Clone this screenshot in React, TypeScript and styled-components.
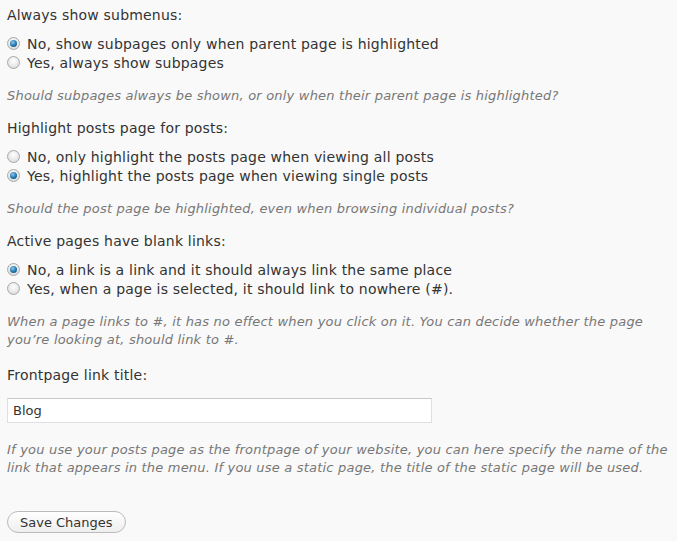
import React from "react";
import styled, { createGlobalStyle } from "styled-components";

const GlobalStyle = createGlobalStyle`
  html, body {
    margin: 0;
    padding: 0;
    background: #f9f9f9;
  }
  body {
    font-family: "DejaVu Sans", Verdana, sans-serif;
    font-size: 14px;
    letter-spacing: 0.2px;
    color: #333;
  }
`;

const Page = styled.form`
  display: flex;
  flex-direction: column;
  align-items: flex-start;
  padding: 6px 7px 8px;
  width: 677px;
  box-sizing: border-box;
`;

const Section = styled.div<{ $top?: number }>`
  display: flex;
  flex-direction: column;
  align-self: stretch;
  margin-top: ${({ $top }) => $top ?? 0}px;
  margin-bottom: 14px;
`;

const Label = styled.div`
  line-height: 18px;
  margin-bottom: 10px;
  color: #333;
`;

const RadioList = styled.div`
  display: flex;
  flex-direction: column;
`;

const Option = styled.label`
  display: flex;
  align-items: center;
  gap: 7px;
  height: 19px;
  color: #333;
`;

const Dot = styled.span<{ $on?: boolean }>`
  width: 13px;
  height: 13px;
  box-sizing: border-box;
  border-radius: 50%;
  border: 1px solid #a8a8a8;
  background: radial-gradient(circle at 50% 35%, #ffffff 0%, #e6e6e6 60%, #cfcfcf 100%);
  display: flex;
  align-items: center;
  justify-content: center;
  flex-shrink: 0;

  &::after {
    content: "";
    display: ${({ $on }) => ($on ? "block" : "none")};
    width: 7px;
    height: 7px;
    border-radius: 50%;
    background: radial-gradient(circle at 40% 35%, #8ccbf0 0%, #1f74ad 55%, #0b3f66 100%);
  }
`;

const Help = styled.p<{ $gap?: number }>`
  margin: ${({ $gap }) => $gap ?? 15}px 0 0;
  font-size: 13px;
  font-style: italic;
  color: #777;
  line-height: 18px;
`;

const TextInput = styled.input`
  display: block;
  width: 425px;
  height: 25px;
  box-sizing: border-box;
  margin: 4px 0 0;
  border: 1px solid #dfdfdf;
  border-top-color: #c8c8c8;
  background: #fff;
  font-family: "DejaVu Sans", Verdana, sans-serif;
  font-size: 13px;
  color: #333;
  padding: 0 5px;
  outline: none;
`;

const Actions = styled.div`
  margin-top: 20px;
`;

const Button = styled.button`
  font-family: "DejaVu Sans", Verdana, sans-serif;
  font-size: 13px;
  letter-spacing: 0;
  color: #333;
  height: 22px;
  padding: 0 12px;
  border: 1px solid #bbb;
  border-radius: 11px;
  background: linear-gradient(#ffffff, #eeeeee);
  cursor: pointer;
`;

type Choice = { text: string; checked?: boolean };

const sections: { label: string; options: Choice[]; help: string }[] = [
  {
    label: "Always show submenus:",
    options: [
      { text: "No, show subpages only when parent page is highlighted", checked: true },
      { text: "Yes, always show subpages" },
    ],
    help: "Should subpages always be shown, or only when their parent page is highlighted?",
  },
  {
    label: "Highlight posts page for posts:",
    options: [
      { text: "No, only highlight the posts page when viewing all posts" },
      { text: "Yes, highlight the posts page when viewing single posts", checked: true },
    ],
    help: "Should the post page be highlighted, even when browsing individual posts?",
  },
  {
    label: "Active pages have blank links:",
    options: [
      { text: "No, a link is a link and it should always link the same place", checked: true },
      { text: "Yes, when a page is selected, it should link to nowhere (#)." },
    ],
    help: "When a page links to #, it has no effect when you click on it. You can decide whether the page you\u2019re looking at, should link to #.",
  },
];

export default function App() {
  return (
    <>
      <GlobalStyle />
      <Page onSubmit={(e) => e.preventDefault()}>
        {sections.map((s) => (
          <Section key={s.label}>
            <Label>{s.label}</Label>
            <RadioList>
              {s.options.map((o) => (
                <Option key={o.text}>
                  <Dot $on={o.checked} />
                  {o.text}
                </Option>
              ))}
            </RadioList>
            <Help>{s.help}</Help>
          </Section>
        ))}
        <Section $top={3}>
          <Label>Frontpage link title:</Label>
          <TextInput defaultValue="Blog" />
          <Help $gap={18}>
            If you use your posts page as the frontpage of your website, you can here specify the name of the
            link that appears in the menu. If you use a static page, the title of the static page will be used.
          </Help>
        </Section>
        <Actions>
          <Button type="submit">Save Changes</Button>
        </Actions>
      </Page>
    </>
  );
}
